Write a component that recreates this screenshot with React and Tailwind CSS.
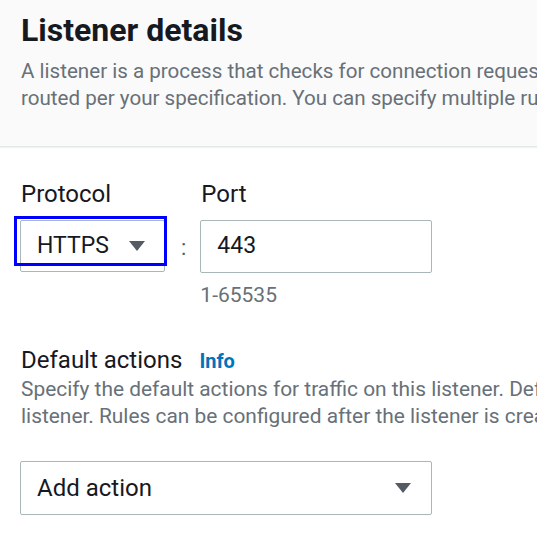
import React from "react";

function Caret({ className }) {
  return (
    <svg viewBox="0 0 18 12" className={className} fill="#545b64">
      <path d="M1 1h16L9 11z" />
    </svg>
  );
}

export default function App() {
  return (
    <div className="w-[537px] h-[545px] overflow-hidden bg-white text-[#16191f]" style={{ fontFamily: "Roboto, 'Liberation Sans', sans-serif" }}>
      <div className="bg-[#fafafa] border-b border-[#e3e8e8] shadow-[0_1px_1px_#eef2f2] h-[147px] pl-[21px] pt-[11px] whitespace-nowrap overflow-hidden">
        <h2 className="text-[32px] leading-[38px] font-bold">Listener details</h2>
        <p className="mt-[9px] text-[20.6px] leading-[27px] text-[#687078]">
          A listener is a process that checks for connection requests using the port and protocol you configure.
          <br />
          routed per your specification. You can specify multiple rules and multiple certificates per listener.
        </p>
      </div>

      <div className="pl-[20px] pt-[32px] overflow-hidden">
        <div className="flex items-start">
          <div className="flex flex-col">
            <span className="text-[24px] leading-[30px] pl-[1px]">Protocol</span>
            <div className="relative mt-[11px]">
              <div className="w-[145px] h-[52px] border border-[#aab7b8] rounded-[2px] flex items-center justify-between pl-[16px] pr-[18px]">
                <span className="text-[23px]">HTTPS</span>
                <Caret className="w-[18px] h-[12px]" />
              </div>
              <div className="absolute left-[-6px] top-[-4px] w-[153px] h-[50px] border-[3px] border-[#0000ff]" />
            </div>
          </div>
          <span className="text-[22px] text-[#545b64] mt-[52px] ml-[16px] mr-[14px]">:</span>
          <div className="flex flex-col">
            <span className="text-[24px] leading-[30px] pl-[1px]">Port</span>
            <div className="mt-[11px] w-[232px] h-[53px] border border-[#aab7b8] rounded-[2px] flex items-center pl-[16px]">
              <span className="text-[23px]">443</span>
            </div>
            <span className="mt-[10px] text-[21px] leading-[24px] text-[#687078]">1-65535</span>
          </div>
        </div>

        <div className="mt-[38px] whitespace-nowrap">
          <div className="flex items-baseline pl-[1px]">
            <span className="text-[24px] leading-[30px]">Default actions</span>
            <span className="ml-[17px] text-[20px] font-bold text-[#0073bb]">Info</span>
          </div>
          <p className="pl-[1px] text-[20.9px] leading-[27px] text-[#687078]">
            Specify the default actions for traffic on this listener. Default actions are applied to this
            <br />
            listener. Rules can be configured after the listener is created.
          </p>
          <div className="mt-[31px] w-[412px] h-[54px] border border-[#aab7b8] rounded-[2px] flex items-center justify-between pl-[16px] pr-[19px]">
            <span className="text-[24px]">Add action</span>
            <Caret className="w-[18px] h-[12px]" />
          </div>
        </div>
      </div>
    </div>
  );
}
